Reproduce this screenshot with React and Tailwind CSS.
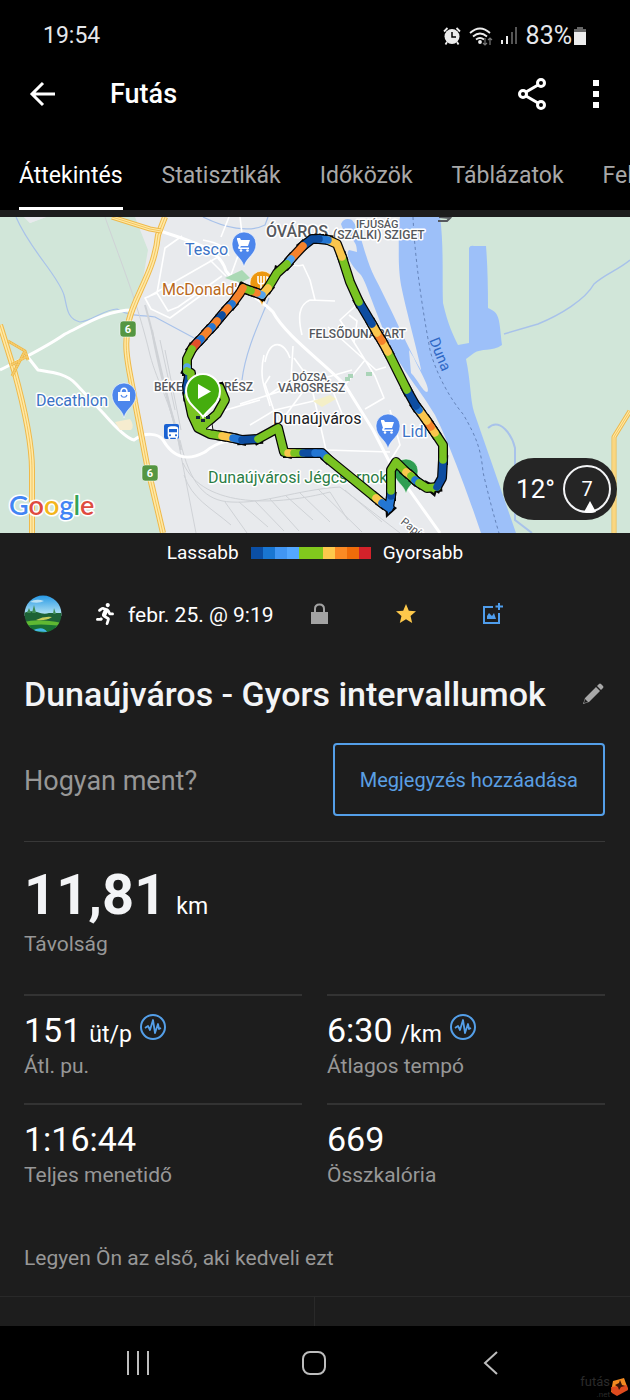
import React from "react";
import { MdStar, MdDirectionsBus } from "react-icons/md";
import { FaRunning } from "react-icons/fa";

const TABS = ["Áttekintés", "Statisztikák", "Időközök", "Táblázatok", "Felszerelés"];

const PACE_COLORS = [
  "#0b4fa5", "#1976d2", "#4196f3", "#54a8ff", "#81c91d",
  "#81c91d", "#fdc94c", "#fb8a24", "#ef6c0a", "#d3222a",
];

const GREEN = "#79c322";
const NAVY = "#0d4da1";
const BLUE = "#2376d3";
const SKY = "#55a4ec";
const YELLOW = "#fac64d";
const ORANGE = "#f5822b";
const RED = "#e2502a";

const ROUTE = [
  [GREEN, "220,388 225,400 217,414 203,426"],
  [NAVY, "189,376 187,386 188,396"],
  [GREEN, "188,396 192,415 198,428 210,434 222,436"],
  [YELLOW, "222,436 233,438"],
  [BLUE, "233,438 242,440"],
  [NAVY, "242,440 258,439"],
  [GREEN, "258,439 278,428 284,452 288,453"],
  [YELLOW, "288,453 294,453"],
  [GREEN, "294,453 303,453"],
  [NAVY, "303,453 315,453"],
  [BLUE, "315,453 322,453 327,458"],
  [GREEN, "327,458 376,498"],
  [YELLOW, "376,498 382,503"],
  [BLUE, "382,503 389,508 391,496"],
  [NAVY, "391,496 391,491"],
  [GREEN, "391,491 391,470 396,462 406,472"],
  [YELLOW, "406,472 411,476"],
  [GREEN, "411,476 415,480"],
  [BLUE, "415,480 419,483"],
  [GREEN, "419,483 427,488 437,487"],
  [NAVY, "437,487 442,478 443,460"],
  [GREEN, "443,460 443,445 435,433"],
  [YELLOW, "435,433 431,427"],
  [ORANGE, "431,427 427,421"],
  [YELLOW, "427,421 419,410"],
  [BLUE, "419,410 416,406"],
  [NAVY, "416,406 407,390"],
  [GREEN, "407,390 388,352"],
  [YELLOW, "388,352 382,341"],
  [ORANGE, "382,341 377,333"],
  [YELLOW, "377,333 372,324"],
  [NAVY, "372,324 359,302"],
  [GREEN, "359,302 350,282 342,257"],
  [YELLOW, "342,257 337,244 328,240"],
  [BLUE, "328,240 319,239"],
  [NAVY, "319,239 312,239 303,246"],
  [ORANGE, "303,246 291,259"],
  [SKY, "291,259 287,264"],
  [GREEN, "287,264 277,273 268,288"],
  [YELLOW, "268,288 262,295"],
  [SKY, "262,295 257,293"],
  [ORANGE, "257,293 251,291"],
  [GREEN, "251,291 243,288"],
  [ORANGE, "243,288 240,293 232,304"],
  [BLUE, "232,304 228,308"],
  [ORANGE, "228,308 222,315"],
  [NAVY, "222,315 217,321"],
  [ORANGE, "217,321 212,327"],
  [BLUE, "212,327 208,331"],
  [ORANGE, "208,331 201,339"],
  [BLUE, "201,339 197,343"],
  [RED, "197,343 192,349"],
  [GREEN, "192,349 187,359 187,367"],
  [SKY, "187,367 187,371"],
  [GREEN, "187,371 191,373 191,378"],
];

function Road({ d, width = 3 }) {
  return <path d={d} fill="none" stroke="#fff" strokeWidth={width} strokeLinejoin="round" />;
}

function Highway({ d, width = 6 }) {
  return (
    <g fill="none" strokeLinejoin="round">
      <path d={d} stroke="#efb94a" strokeWidth={width} />
      <path d={d} stroke="#ffe9a6" strokeWidth={width - 2} />
      <path d={d} stroke="#f3c55e" strokeWidth="1" />
    </g>
  );
}

function MapText({ x, y, size, fill = "#55585d", weight = 400, children, ...rest }) {
  return (
    <text
      x={x} y={y} fontSize={size} fill={fill} fontWeight={weight}
      stroke="#fff" strokeWidth="3" strokeLinejoin="round" paintOrder="stroke" {...rest}
    >
      {children}
    </text>
  );
}

function Pin({ x, y, fill, children }) {
  return (
    <g transform={`translate(${x} ${y})`}>
      <path d="M0 23 C-2 13 -12 11 -12 0 A12 12 0 0 1 12 0 C12 11 2 13 0 23Z" fill={fill} stroke="#fff" strokeWidth="0.6" />
      {children}
    </g>
  );
}

function Cart() {
  return (
    <g fill="#fff">
      <path d="M-7 -6h3l1 2H6L4 2H-3l-1 1.5H5V5H-5.500l-.5-2 1-1-2-6.500H-7Z" />
      <circle cx="-3" cy="6.500" r="1.300" />
      <circle cx="3.500" cy="6.500" r="1.300" />
    </g>
  );
}

function Shield({ x, y }) {
  return (
    <g>
      <rect x={x - 8} y={y - 8} width="16" height="16" rx="3" fill="#559642" stroke="#fff" strokeWidth="0.5" />
      <text x={x} y={y + 4} fontSize="11" fontWeight="700" fill="#fff" textAnchor="middle">6</text>
    </g>
  );
}

function RouteMap() {
  return (
    <svg
      viewBox="0 217 630 316" preserveAspectRatio="xMidYMid slice"
      className="block h-[316px] w-full font-[Roboto,sans-serif]" role="img" aria-label="Dunaújváros"
    >
      <rect x="0" y="217" width="630" height="316" fill="#e8eaed" />
      <path d="M0 217H24L30 223L46 217H135L148 250L141 290L131 305L128 345L135 400L147 460L165 533H0Z" fill="#d1e6d9" />
      <path d="M438 217H630V533H514L480 430L440 370Z" fill="#d1e6d9" />
      <path d="M24 217L30 223L46 217Z" fill="#e8eaed" />

      <g fill="none" stroke="#a8c2ea" strokeWidth="1.200">
        <path d="M16 217C30 250 58 275 64 295C67 305 66 319 80 322C92 321 105 309 117 309C130 317 143 315 155 317L196 339" />
        <path d="M203 217C225 228 249 233 265 225L268 217" />
        <path d="M269 298C263 315 246 347 242 380" />
        <path d="M504 334L538 324C560 315 585 300 594 284C605 274 618 270 630 260" strokeWidth="1.500" />
        <path d="M488 428C500 417 512 435 515 448V520L532 533" strokeWidth="2" />
      </g>

      <path d="M400 217H440C444 245 442 280 443 303C448 325 453 335 458 345L469 343V248Q470 245 474 246H486Q488 270 488 308C500 313 499 318 502 345C492 352 481 348 474 353L466 359C471 383 470 398 474 412L516 533H481C470 500 450 445 435 415C420 390 410 380 393 352C370 300 366 280 360 274C350 264 345 254 349 250L357 252C357 236 346 240 341 224Q344 217 352 220C362 232 364 257 375 278C397 320 413 361 430 384L422 374C420 361 406 310 401 285C397 260 400 245 398 230Z" fill="#9dc0f9" />
      <path d="M411 373C418 380 423 392 427 392C432 390 417 366 414 358L409 350Z" fill="#e8eaed" />
      <path d="M413 217C415 262 423 312 430 350C436 374 451 400 463 414C477 438 481 450 483 472C488 494 495 520 499 533" fill="none" stroke="#6483b9" strokeWidth="1" strokeDasharray="3 3" />

      <g fill="none" stroke="#cfd2d6" strokeWidth="1">
        <path d="M105 217C120 260 137 300 150 355C158 385 170 400 178 440L196 533" />
        <path d="M145 305C158 350 166 400 178 434" strokeWidth="2" />
        <path d="M152 330C160 380 172 410 181 450" strokeWidth="2" />
        <path d="M160 340L175 410M165 350L181 430M180 440C190 485 206 501 231 502C265 504 295 490 340 487L400 533" />
        <path d="M183 463C204 510 280 505 330 492L348 520" />
        <path d="M225 502L247 533M239 502L268 527M255 501L284 531M270 499L299 531M286 496L313 520M300 493L330 522M318 489L362 532M345 490L382 522M184 475C192 499 210 507 231 525" />
      </g>

      <Road d="M0 370C20 360 45 348 65 334C84 325 106 310 133 310" />
      <Road d="M27 356L38 370C50 372 66 373 76 384L104 414C118 430 129 439 134 440C145 432 158 433 163 440C174 459 188 461 205 452C218 441 230 440 243 440" />
      <Road d="M160 231C194 242 220 249 226 271C240 290 262 300 273 312C285 335 324 363 345 385L373 430L390 463L420 505L440 533" />
      <g fill="none" stroke="#fff" strokeWidth="1.600" strokeLinejoin="round">
        <path d="M182 236L165 248L157 293L168 311L178 307L222 276M148 297L218 257M157 293L145 298L151 309L170 318L207 291M210 260L226 276M203 240C218 243 225 246 229 256M221 237L229 217" />
        <path d="M289 264C295 266 300 266 303 265L310 280L315 300M310 300C298 305 298 318 302 335M310 300L335 301M264 355C258 380 267 392 270 406M265 362C270 337 285 342 290 358M293 346L291 379L269 395M270 376L265 384L279 426M294 358L310 380L326 450L390 452M240 404L300 385L352 370M305 389L282 420M330 384L345 421M345 385L365 360L340 320L362 300M365 360L375 376L384 398L365 409M390 410L400 445L390 461M250 425L275 410L318 400M192 420L260 400M349 315L357 321L354 343M328 327L376 370L386 367M231 275L243 242L240 217" />
      </g>
      <path d="M225 278L242 270L250 278L240 283Z" fill="#aad9b5" />
      <path d="M313 401L330 395L336 399L322 407ZM316 389L322 384L324 391Z" fill="#f4efc7" />
      <path d="M348 374h5v4h-5zM366 372h6v4h-6zM345 377h5v4h-5z" fill="#aad4b8" />
      <path d="M115 422L130 419Q135 426 131 430L120 430Z" fill="#f6eccf" />

      <Highway d="M165 217L158 235C155 270 135 295 129 320C122 350 130 370 135 402L147 465L163 533" />
      <Highway d="M112 217L150 229L161 231" width={5} />
      <Highway d="M0 325L14 370C25 410 32 445 32 470V533" />
      <Highway d="M8 341L25 351L28 360M26 357L11 365M25 351L12 376" width={3} />
      <Highway d="M630 411L614 437V533" width={5} />

      <Shield x={128} y={329} />
      <Shield x={150} y={473} />
      <rect x="164" y="424" width="15" height="15" rx="2" fill="#1a62d2" />
      <MdDirectionsBus x="165" y="425" width="13" height="13" color="#fff" />

      <Pin x={244} y={244} fill="#4d86ec"><Cart /></Pin>
      <Pin x={388} y={426} fill="#4d86ec"><Cart /></Pin>
      <Pin x={124} y={395} fill="#4d86ec">
        <path d="M-6 -3H6V6H-6Z" fill="#fff" />
        <path d="M-3 -3C-3 -8 3 -8 3 -3" fill="none" stroke="#fff" strokeWidth="1.500" />
        <path d="M-3 0C-2 3 2 3 3 0" fill="none" stroke="#4d86ec" strokeWidth="1.200" />
      </Pin>

      <MapText x={185} y={255} size={16} fill="#3b73c5">Tesco</MapText>
      <MapText x={162} y={295} size={16} fill="#b9691c">McDonald&apos;s</MapText>
      <MapText x={36} y={406} size={16} fill="#3b73c5">Decathlon</MapText>
      <MapText x={402} y={437} size={16} fill="#3b73c5">Lidl</MapText>
      <MapText x={266} y={237} size={16} weight={500}>ÓVÁROS</MapText>
      <MapText x={356} y={228} size={11} weight={500}>IFJÚSÁG</MapText>
      <MapText x={333} y={239} size={12} weight={500}>(SZALKI) SZIGET</MapText>
      <MapText x={309} y={338} size={12} weight={500}>FELSŐDUNAPART</MapText>
      <MapText x={154} y={391} size={12} weight={500}>BÉKE VÁROSRÉSZ</MapText>
      <MapText x={292} y={381} size={11} weight={500}>DÓZSA</MapText>
      <MapText x={278} y={392} size={12} weight={500}>VÁROSRÉSZ</MapText>
      <MapText x={273} y={424} size={16} fill="#202124">Dunaújváros</MapText>
      <MapText x={208} y={483} size={16} fill="#2b7d45">Dunaújvárosi Jégcsarnok</MapText>
      <text x="429" y="340" fontSize="15" fill="#2f68c5" transform="rotate(68 429 340)">Duna</text>
      <MapText x={400} y={523} size={11} transform="rotate(38 400 523)">Papír</MapText>
      <path d="M439 217L450 218L447 221H438" fill="none" stroke="#55585d" strokeWidth="2" />

      <Pin x={262} y={283} fill="#ec970f">
        <path d="M-4 -7V-2Q-4 1 -1 1V8M-1 -7V1M2 -7V-1Q2 1 -1 1M5 8V-6Q8 -5 7 1H5" fill="none" stroke="#fff" strokeWidth="1.600" />
      </Pin>
      <Pin x={406} y={471} fill="#2f9e52" />

      <g fill="none" strokeLinejoin="round" strokeLinecap="square">
        {ROUTE.map(([, points], i) => (
          <polyline key={i} points={points} stroke="#060606" strokeWidth="10" />
        ))}
      </g>
      <g fill="#060606">
        <path d="M385 500L386 518L397 508ZM425 480L429 492L435 497L438 487ZM206 330L206 325L210 324ZM215 320L216 315L221 315ZM274 270L275 265L280 267ZM407 393L409 403L415 402Z" />
      </g>
      <path d="M387 502L388 514L394 507Z" fill={BLUE} />
      <path d="M428 486L431 491L434 493L436 486Z" fill={GREEN} />
      <path d="M189 400L206 418L214 418L206 426L200 432Z" fill={GREEN} />
      <g fill="none" strokeLinejoin="round" strokeLinecap="round">
        {ROUTE.map(([color, points], i) => (
          <polyline key={i} points={points} stroke={color} strokeWidth="7.500" />
        ))}
      </g>
      <path d="M206 429L212 424L213 430Z" fill="#f5f5f5" stroke="#111" strokeWidth="1" />
      <path d="M196 416h4v3h-4zM201 419h4v3h-4zM206 416h4v3h-4z" fill="#16243a" />
      <path d="M203 417C198 409 186 404 186 391A17 17 0 0 1 220 391C220 404 208 409 203 417Z" fill="#45ad0e" stroke="#fff" strokeWidth="2" />
      <path d="M198 384V399L211 391.500Z" fill="#fff" />

      <text
        x="9" y="515" fontSize="27" fontWeight="600" fontFamily="Lato, sans-serif"
        stroke="#fff" strokeWidth="3" strokeLinejoin="round" paintOrder="stroke"
      >
        <tspan fill="#4285f4">G</tspan><tspan fill="#de4b40">o</tspan><tspan fill="#f3b51b">o</tspan>
        <tspan fill="#4285f4">g</tspan><tspan fill="#36a355">l</tspan><tspan fill="#de4b40">e</tspan>
      </text>
    </svg>
  );
}

function StatusBar() {
  return (
    <div className="flex h-[70px] items-center justify-between bg-black pt-[2px] pr-11 pl-[43px] text-[23px] text-gray-200">
      <span>19:54</span>
      <div className="flex items-center gap-2">
        <svg viewBox="0 0 18 20" className="h-5 w-[18px]" fill="none" stroke="#ececec">
          <circle cx="9" cy="10.500" r="7.500" fill="#ececec" stroke="none" />
          <path d="M1 5.500L4.500 2M17 5.500L13.500 2M4 16L2.500 18.500M14 16L15.500 18.500" strokeWidth="1.800" />
          <path d="M9 6V11H13" stroke="#000" strokeWidth="1.500" />
        </svg>
        <svg viewBox="0 0 24 20" className="h-5 w-6" fill="none" stroke="#ececec" strokeWidth="1.800">
          <path d="M1 7Q11 -2 21 7M4 10.500Q11 4.500 18 10.500M7 13.500Q11 10.500 15 13.500" />
          <circle cx="11" cy="16" r="1" fill="#ececec" />
          <path d="M16 12V19M14 17L16 19L18 17M21 19V12M19 14L21 12L23 14" stroke="#777" strokeWidth="1.200" />
        </svg>
        <svg viewBox="0 0 17 20" className="h-5 w-[17px]">
          <path d="M0 14h2v4H0zM5 10h2v8H5z" fill="#ececec" />
          <path d="M10 6h2v12h-2zM14 1h2v17h-2z" fill="#555" />
        </svg>
        <div className="flex items-center gap-[2px]">
          <span className="text-[25px]">83%</span>
          <svg viewBox="0 0 12 18" className="h-[18px] w-3">
            <path d="M3 0h6v2h3v4H0V2h3z" fill="#666" />
            <path d="M0 5h12v13H0z" fill="#ececec" />
          </svg>
        </div>
      </div>
    </div>
  );
}

function AppBar() {
  return (
    <header className="flex h-12 items-center bg-black pr-7 pl-[29px] text-white">
      <button type="button" aria-label="Vissza">
        <svg viewBox="0 0 28 28" className="size-7" fill="none" stroke="currentColor" strokeWidth="3">
          <path d="M14 3L3 14L14 25M3 14H26" />
        </svg>
      </button>
      <h1 className="ml-[53px] flex-1 pt-px text-[27px] font-medium">Futás</h1>
      <button type="button" aria-label="Megosztás">
        <svg viewBox="0 0 30 34" className="h-[34px] w-[30px]" fill="none" stroke="currentColor" strokeWidth="3">
          <circle cx="24" cy="6" r="3.500" />
          <circle cx="6" cy="17" r="3.500" />
          <circle cx="24" cy="28" r="3.500" />
          <path d="M9 15L21 8M9 19L21 26" />
        </svg>
      </button>
      <button type="button" aria-label="Továbbiak" className="ml-[43px]">
        <svg viewBox="0 0 12 30" className="h-[30px] w-3" fill="currentColor">
          <path d="M3 1h6v6H3zM3 12h6v6H3zM3 23h6v6H3z" />
        </svg>
      </button>
    </header>
  );
}

function TrendIcon() {
  return (
    <svg viewBox="0 0 28 28" className="size-7" fill="none" stroke="#549fe8" strokeLinejoin="round">
      <circle cx="14" cy="14" r="12" strokeWidth="2" />
      <path d="M6 15L9 13L11 17L14 7L16 20L19 11L20 16L22 15" strokeWidth="1.800" />
    </svg>
  );
}

function Stat({ value, unit, label, trend }) {
  return (
    <div className="border-t-2 border-[#333] pt-[14px] pb-[23px]">
      <div className="flex h-10 items-baseline">
        <span className="text-[34px] leading-10">{value}</span>
        {unit && <span className="ml-2 text-[23px] leading-10">{unit}</span>}
        {trend && <button type="button" aria-label={`${label} grafikon`} className="ml-[7px] self-start pt-[3px]"><TrendIcon /></button>}
      </div>
      <p className="pt-[2px] text-[21px] leading-7 text-[#979797]">{label}</p>
    </div>
  );
}

export default function App() {
  return (
    <div className="flex min-h-screen flex-col overflow-hidden bg-[#1d1d1d] font-[Roboto,sans-serif] text-white">
      <StatusBar />
      <AppBar />
      <nav className="flex h-[92px] items-end gap-[39px] overflow-hidden bg-black pl-[19px]">
        {TABS.map((tab, i) => (
          <a
            key={tab} href="#"
            className={i === 0
              ? "h-[54px] shrink-0 border-b-3 border-white text-[23px] leading-10 text-white"
              : "h-[54px] shrink-0 text-[23px] leading-10 text-[#a8a8a8]"}
          >
            {tab}
          </a>
        ))}
      </nav>

      <main className="flex flex-1 flex-col pt-[7px]">
        <section className="relative">
          <RouteMap />
          <div className="absolute right-[13px] bottom-[13px] flex h-[62px] items-center gap-2 rounded-full bg-[#252525] pr-[6px] pl-[13px]">
            <span className="text-[26px]">12°</span>
            <div className="relative flex size-12 items-center justify-center rounded-full border-2 border-gray-100 text-xl">
              7
              <svg viewBox="0 0 12 12" className="absolute bottom-[-2px] left-[19px] size-3"><path d="M6 0L12 11Q6 13 0 11Z" fill="#fff" /></svg>
            </div>
          </div>
        </section>

        <div className="flex h-10 items-center justify-center gap-3 text-[19px]">
          <span>Lassabb</span>
          <div className="flex h-3">
            {PACE_COLORS.map((color, i) => (
              <span key={i} className="h-3 w-3" style={{ backgroundColor: color }} />
            ))}
          </div>
          <span>Gyorsabb</span>
        </div>

        <div className="flex h-[82px] items-center pl-6">
          <svg viewBox="0 0 38 38" className="size-[38px]">
            <defs>
              <clipPath id="avatar"><circle cx="19" cy="19" r="18.500" /></clipPath>
              <linearGradient id="sky" x1="0" y1="0" x2="0" y2="1"><stop stopColor="#2397e5" /><stop offset="1" stopColor="#bfe9f4" /></linearGradient>
            </defs>
            <g clipPath="url(#avatar)">
              <rect width="38" height="21" fill="url(#sky)" />
              <path d="M6 7Q12 3 20 6Q15 9 6 7Z" fill="#b8e0f4" />
              <path d="M0 18Q5 15 13 17Q20 20 25 18L38 18V38H0Z" fill="#1d6236" />
              <path d="M8 18L10 10L12 18ZM3 18L5 13L7 18ZM29 19L30 13L32 19Z" fill="#3d8c55" />
              <path d="M0 27Q14 23 38 28V33H0Z" fill="#5fb832" />
              <path d="M12 25Q20 21 28 22Q22 26 12 25Z" fill="#c5cc58" />
              <path d="M0 31Q15 28 38 31V38H0Z" fill="#187033" />
              <path d="M7 36Q19 30 23 37Z" fill="#44b6e5" />
            </g>
          </svg>
          <FaRunning className="ml-[32px] size-[22px]" />
          <time className="ml-3 w-[180px] pt-[3px] text-[21px]">febr. 25. @ 9:19</time>
          <svg viewBox="0 0 24 24" className="size-6" role="img" aria-label="Zárolt">
            <path d="M3 10H20V22H3Z" fill="#a3a3a3" />
            <path d="M7 11V7Q7 2.500 11.500 2.500Q16 2.500 16 7V11" fill="none" stroke="#a3a3a3" strokeWidth="2" />
          </svg>
          <button type="button" aria-label="Kedvenc" className="ml-[62px]"><MdStar className="size-6 text-[#fdc84b]" /></button>
          <button type="button" aria-label="Fotó hozzáadása" className="ml-[62px]">
            <svg viewBox="0 0 24 24" className="size-6" fill="none" stroke="#4f9dec" strokeWidth="2">
              <path d="M13 5H4V21H19V11M19 1V8M15.500 4.500H23" />
              <path d="M7 17V14L9 11L12 14L14 11L16 17Z" fill="#4f9dec" stroke="none" />
            </svg>
          </button>
        </div>

        <div className="flex flex-col pr-[25px] pl-6">
          <div className="flex h-[74px] items-center justify-between pt-[3px]">
            <h2 className="text-[34px] leading-10 font-medium text-gray-100">Dunaújváros - Gyors intervallumok</h2>
            <button type="button" aria-label="Szerkesztés">
              <svg viewBox="0 0 24 24" className="size-6" fill="#a8a8a8">
                <path d="M16 4L18 2Q19 1 20 2L22 4Q23 5 22 6L20 8ZM15 5L19 9L8 20L2 22L4 16Z" />
                <path d="M4 17L7 20L3 21Z" fill="#1d1d1d" />
              </svg>
            </button>
          </div>
          <div className="mt-[14px] flex items-center justify-between border-b border-[#383838] pb-[25px]">
            <p className="pt-[3px] text-[27px] leading-9 text-[#979797]">Hogyan ment?</p>
            <button type="button" className="h-[73px] rounded-[4px] border-2 border-[#549fe8] px-[25px] text-xl text-[#5a9fe3]">
              Megjegyzés hozzáadása
            </button>
          </div>

          <div className="pt-5 pb-[34px]">
            <p className="flex items-baseline gap-[10px]">
              <strong className="text-[56px] leading-[66px] font-bold text-gray-100">11,81</strong>
              <span className="text-[23px]">km</span>
            </p>
            <p className="text-[21px] leading-8 text-[#979797]">Távolság</p>
          </div>

          <div className="grid grid-cols-2 gap-x-[25px]">
            <Stat value="151" unit="üt/p" label="Átl. pu." trend />
            <Stat value="6:30" unit="/km" label="Átlagos tempó" trend />
            <Stat value="1:16:44" label="Teljes menetidő" />
            <Stat value="669" label="Összkalória" />
          </div>
          <p className="pt-8 pb-6 text-[21px] leading-7 text-[#979797]">Legyen Ön az első, aki kedveli ezt</p>
        </div>
        <div className="grid min-h-[30px] flex-1 grid-cols-2 border-t border-[#292929]">
          <div className="border-r border-[#292929]" />
        </div>
      </main>

      <footer className="relative h-[74px] bg-black">
        <nav className="grid h-full grid-cols-3 place-items-center pr-[52px] pl-[50px] text-[#bdbdbd]">
          <button type="button" aria-label="Legutóbbiak">
            <svg viewBox="0 0 26 26" className="size-[26px]" stroke="currentColor" strokeWidth="2"><path d="M3 1V25M13 1V25M23 1V25" /></svg>
          </button>
          <button type="button" aria-label="Kezdőképernyő">
            <svg viewBox="0 0 26 26" className="size-[26px]" fill="none" stroke="currentColor" strokeWidth="2"><rect x="2" y="2" width="22" height="22" rx="7" /></svg>
          </button>
          <button type="button" aria-label="Vissza">
            <svg viewBox="0 0 26 26" className="size-[26px]" fill="none" stroke="currentColor" strokeWidth="2"><path d="M20 2L8 13L20 24" /></svg>
          </button>
        </nav>
        <div className="absolute right-[2px] bottom-0 flex items-center">
          <div className="flex flex-col items-end text-[#2b2b2b]">
            <span className="text-[13px] leading-4">futás</span>
            <span className="text-[8px] leading-[10px]">.net</span>
          </div>
          <svg viewBox="0 0 18 18" className="size-[18px]">
            <path d="M3 3L14 0L18 11L7 17L1 14Z" fill="#f28a20" />
            <path d="M1 9L17 7L18 12L7 18L2 15Z" fill="#df4b1e" />
            <path d="M5 7L9 5L10 2L12 7L15 8L11 9L9 12L8 9Z" fill="#391408" />
          </svg>
        </div>
      </footer>
    </div>
  );
}
